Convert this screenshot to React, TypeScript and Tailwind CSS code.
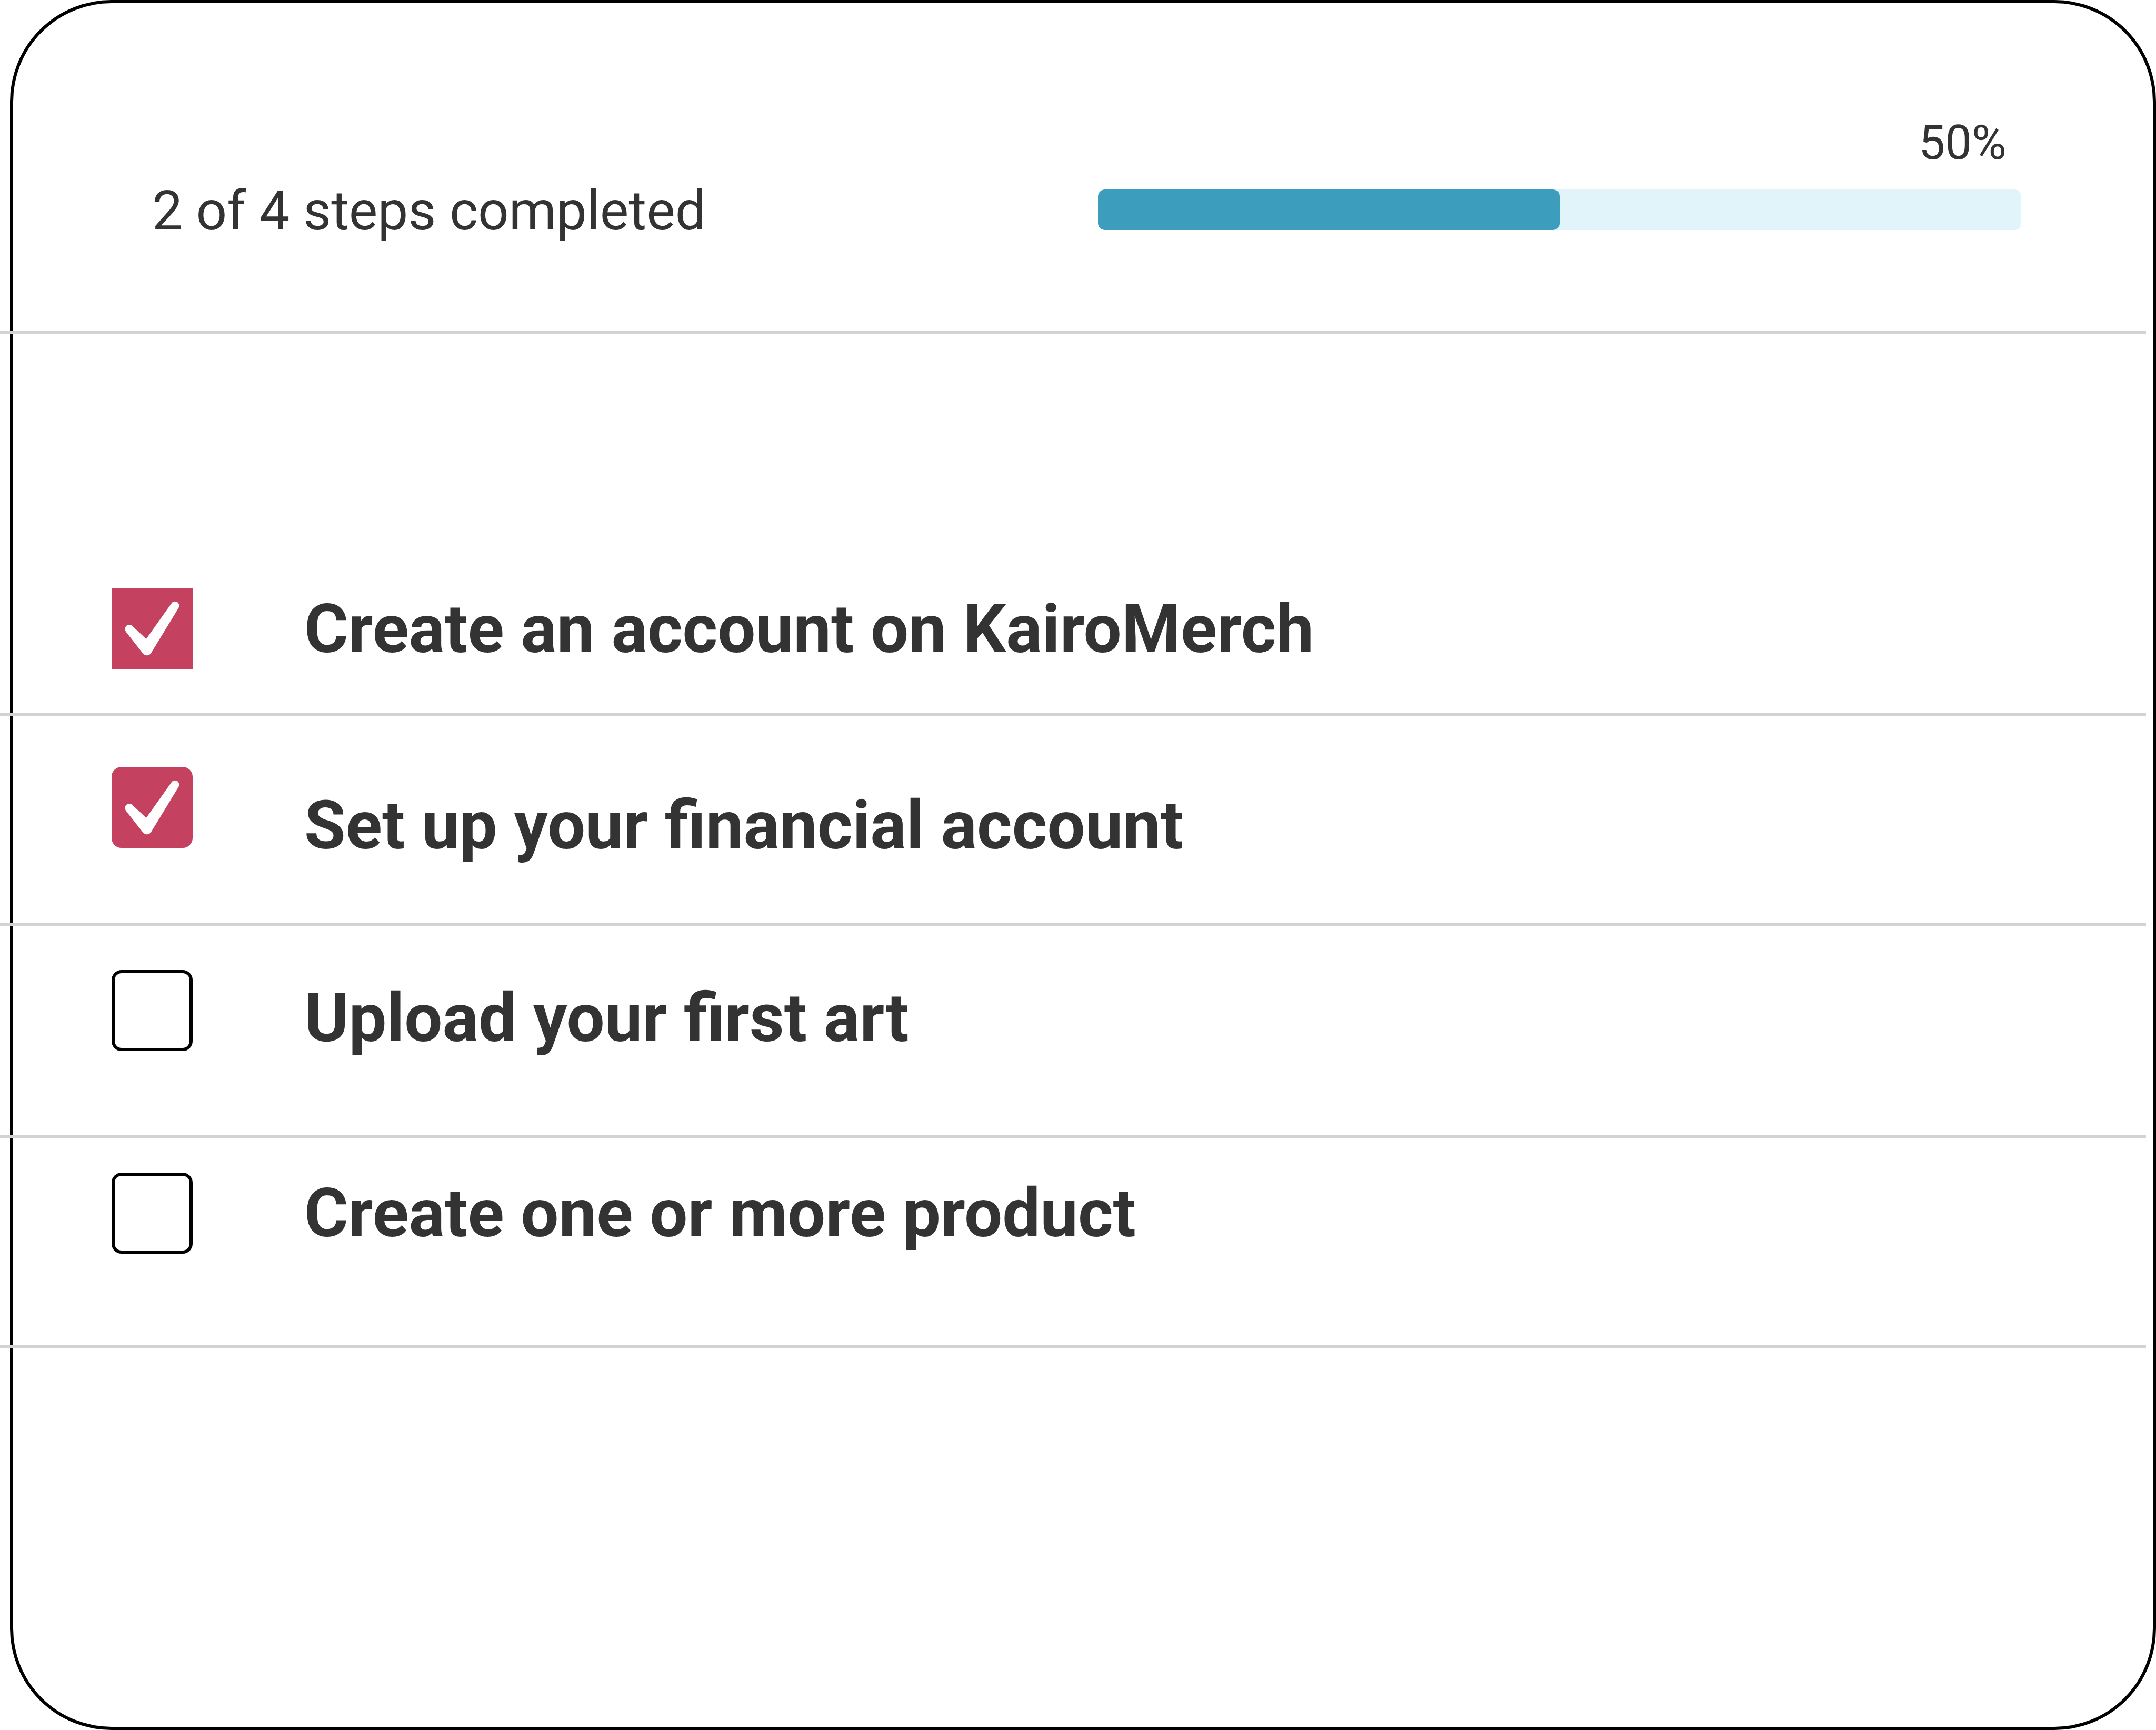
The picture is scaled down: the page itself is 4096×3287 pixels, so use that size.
import React, { useState } from "react";

type Step = {
  id: string;
  label: string;
  done: boolean;
  row: string;
  box: string;
  text: string;
};

const steps: Step[] = [
  {
    id: "account",
    label: "Create an account on KairoMerch",
    done: true,
    row: "h-[726px] pt-[482px]",
    box: "rounded-none",
    text: "pt-[3px]",
  },
  {
    id: "financial",
    label: "Set up your financial account",
    done: true,
    row: "h-[398px] pt-[96px]",
    box: "rounded-[19px]",
    text: "pt-[36px]",
  },
  {
    id: "art",
    label: "Upload your first art",
    done: false,
    row: "h-[404px] pt-[84px]",
    box: "rounded-[19px]",
    text: "pt-[16px]",
  },
  {
    id: "product",
    label: "Create one or more product",
    done: false,
    row: "h-[398px] pt-[65px]",
    box: "rounded-[19px]",
    text: "pt-[2px]",
  },
];

function CheckMark() {
  return (
    <svg
      viewBox="0 0 576 576"
      aria-hidden="true"
      className="pointer-events-none col-start-1 row-start-1 hidden size-[154px] fill-white peer-checked:block"
    >
      <path d="M246 363 L428 107 C434 99 442 96 450 96 C467 96 480 109 480 126 C480 133 478 139 474 146 L282 461 C275 473 264 480 250 480 C238 480 228 473 222 465 L103 313 C98 307 96 300 96 292 C96 275 109 262 126 262 C134 262 141 265 148 271 Z" />
    </svg>
  );
}

export default function App() {
  const [done, setDone] = useState<Record<string, boolean>>(
    Object.fromEntries(steps.map((s) => [s.id, s.done])),
  );
  const count = steps.filter((s) => done[s.id]).length;
  const percent = Math.round((count / steps.length) * 100);

  return (
    <div className="relative min-h-screen bg-white font-[Roboto,sans-serif] text-[#333333]">
      {/* Card outline; the dividers run across its left edge */}
      <div className="absolute inset-y-0 right-0 left-[19px] rounded-[193px] border-[6px] border-black" />

      <main className="relative mr-[19px]">
        <header className="flex h-[635px] items-start justify-between border-b-[6px] border-[#d3d3d3] pr-[237px] pl-[289px]">
          <h1 className="pt-[341px] text-[103px] leading-[120px]">
            {count} of {steps.length} steps completed
          </h1>
          <div className="w-[49.4%] pt-[219px]">
            <p className="pr-[28px] text-right text-[90px] leading-[105px]">{percent}%</p>
            <div
              role="progressbar"
              aria-label="Steps completed"
              aria-valuemin={0}
              aria-valuemax={100}
              aria-valuenow={percent}
              className="mt-[36px] h-[77px] overflow-hidden rounded-[13px] bg-[#e1f4fa]"
            >
              <div className="h-full rounded-[13px] bg-[#3d9dbc]" style={{ width: `${percent}%` }} />
            </div>
          </div>
        </header>

        <ul>
          {steps.map((s) => (
            <li
              key={s.id}
              className={`flex items-start gap-[212px] border-b-[6px] border-[#d3d3d3] pl-[212px] ${s.row}`}
            >
              <div className="grid shrink-0">
                <input
                  id={s.id}
                  type="checkbox"
                  checked={done[s.id]}
                  onChange={() => setDone({ ...done, [s.id]: !done[s.id] })}
                  className={`peer col-start-1 row-start-1 size-[154px] appearance-none border-[6px] border-black checked:border-[#c4415f] checked:bg-[#c4415f] ${s.box}`}
                />
                <CheckMark />
              </div>
              <label
                htmlFor={s.id}
                className={`text-[128px] leading-[150px] font-bold ${s.text}`}
              >
                {s.label}
              </label>
            </li>
          ))}
        </ul>
      </main>
    </div>
  );
}
